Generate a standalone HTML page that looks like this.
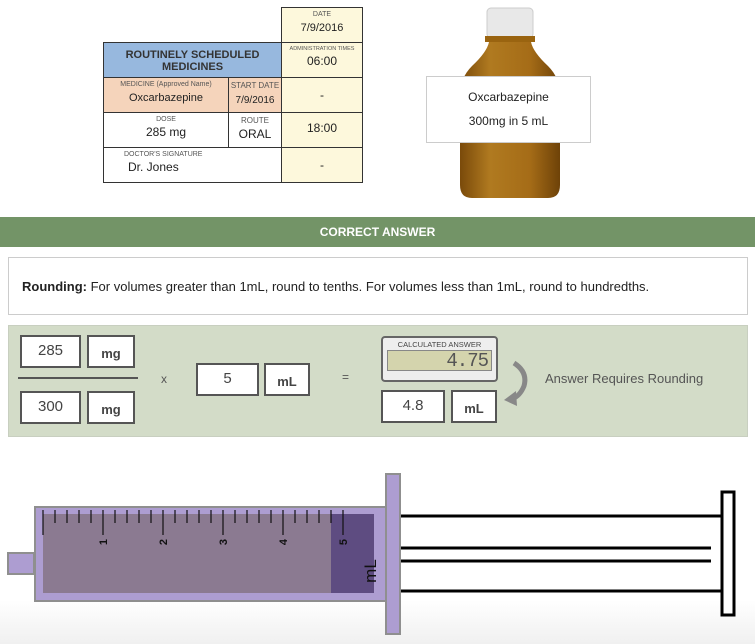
<!DOCTYPE html>
<html><head><style>
*{margin:0;padding:0;box-sizing:border-box}
body{width:755px;height:644px;background:#fff;font-family:"Liberation Sans",Arial,sans-serif;position:relative;overflow:hidden;color:#222}
.a{position:absolute}
.c{position:absolute;border:1px solid #333;text-align:center}
.sm{font-size:7px;color:#555;display:block}
.bx{position:absolute;background:#fff;border:2px solid #555;text-align:center;font-size:15px;color:#444;padding-top:5px}
.u{font-weight:bold;font-size:13px;padding-top:9px}
</style></head><body>
<div class="c" style="left:281px;top:7px;width:82px;height:36px;background:#fdf8dc;padding-top:3px"><span class="sm">DATE</span><span style="font-size:11px">7/9/2016</span></div>
<div class="c" style="left:103px;top:42px;width:179px;height:36px;background:#97b8de;font-weight:bold;font-size:11px;padding-top:6px;line-height:12px;color:#333">ROUTINELY SCHEDULED<br>MEDICINES</div>
<div class="c" style="left:281px;top:42px;width:82px;height:36px;background:#fdf8dc;padding-top:3px"><span class="sm" style="font-size:5.5px">ADMINISTRATION TIMES</span><span style="font-size:12px;line-height:18px">06:00</span></div>
<div class="c" style="left:103px;top:77px;width:126px;height:36px;background:#f5d4bb;padding-top:3px"><span class="sm">MEDICINE (Approved Name)</span><span style="font-size:11px;line-height:18px">Oxcarbazepine</span></div>
<div class="c" style="left:228px;top:77px;width:54px;height:36px;background:#f5d4bb;padding-top:3px"><span class="sm" style="font-size:8px">START DATE</span><span style="font-size:10px;line-height:14px">7/9/2016</span></div>
<div class="c" style="left:281px;top:77px;width:82px;height:36px;background:#fdf8dc;padding-top:10px;font-size:12px">-</div>
<div class="c" style="left:103px;top:112px;width:126px;height:36px;padding-top:3px"><span class="sm">DOSE</span><span style="font-size:12px;line-height:16px">285 mg</span></div>
<div class="c" style="left:228px;top:112px;width:54px;height:36px;padding-top:3px"><span class="sm" style="font-size:8px">ROUTE</span><span style="font-size:12px;line-height:14px">ORAL</span></div>
<div class="c" style="left:281px;top:112px;width:82px;height:36px;background:#fdf8dc;padding-top:8px;font-size:12px">18:00</div>
<div class="c" style="left:103px;top:147px;width:179px;height:36px;text-align:left;padding:3px 0 0 20px"><span class="sm">DOCTOR'S SIGNATURE</span><span style="font-size:12px;margin-left:4px">Dr. Jones</span></div>
<div class="c" style="left:281px;top:147px;width:82px;height:36px;background:#fdf8dc;padding-top:10px;font-size:12px">-</div>
<svg class="a" style="left:440px;top:0" width="140" height="205">
<defs><linearGradient id="g" x1="0" x2="1"><stop offset="0" stop-color="#7a4a0a"/><stop offset=".3" stop-color="#b07a20"/><stop offset=".7" stop-color="#a56c17"/><stop offset="1" stop-color="#6e4208"/></linearGradient></defs>
<rect x="47" y="8" width="46" height="30" rx="4" fill="#e8e8e8" stroke="#ccc"/>
<rect x="45" y="36" width="50" height="6" fill="#9a6410"/>
<path d="M49 42 L91 42 Q93 52 108 66 Q120 78 120 95 L120 185 Q120 198 108 198 L32 198 Q20 198 20 185 L20 95 Q20 78 32 66 Q47 52 49 42Z" fill="url(#g)"/>
</svg>
<div class="a" style="left:426px;top:76px;width:165px;height:67px;background:#fff;border:1px solid #ccc;text-align:center;font-size:12px;padding-top:8px;line-height:24px">Oxcarbazepine<br>300mg in 5 mL</div>
<div class="a" style="left:0;top:217px;width:755px;height:30px;background:#739467;color:#fff;font-weight:bold;font-size:12px;text-align:center;line-height:30px">CORRECT ANSWER</div>
<div class="a" style="left:8px;top:257px;width:740px;height:58px;border:1px solid #ccc;font-size:13px;padding:21px 0 0 13px"><b>Rounding:</b> For volumes greater than 1mL, round to tenths. For volumes less than 1mL, round to hundredths.</div>
<div class="a" style="left:8px;top:325px;width:740px;height:112px;background:#d3dcc8;border:1px solid #c8cfc0"></div>
<div class="bx" style="left:20px;top:335px;width:61px;height:33px">285</div>
<div class="bx u" style="left:87px;top:335px;width:48px;height:33px">mg</div>
<div class="a" style="left:18px;top:377px;width:120px;height:2px;background:#555"></div>
<div class="bx" style="left:20px;top:391px;width:61px;height:33px">300</div>
<div class="bx u" style="left:87px;top:391px;width:48px;height:33px">mg</div>
<div class="a" style="left:161px;top:372px;font-size:12px;color:#555">x</div>
<div class="bx" style="left:196px;top:363px;width:63px;height:33px">5</div>
<div class="bx u" style="left:264px;top:363px;width:46px;height:33px">mL</div>
<div class="a" style="left:342px;top:370px;font-size:12px;color:#555">=</div>
<div class="a" style="left:381px;top:336px;width:117px;height:46px;background:#eee;border:2px solid #666;border-radius:4px">
<div style="font-size:7.5px;color:#444;text-align:center;margin-top:2px">CALCULATED ANSWER</div>
<div style="margin:1px 4px;height:21px;background:#d4d4ad;border:1px solid #888;text-align:right;font-family:'Liberation Mono',monospace;font-size:19px;line-height:20px;padding-right:3px;color:#555;letter-spacing:-1px">4.75</div></div>
<div class="bx" style="left:381px;top:390px;width:64px;height:33px">4.8</div>
<div class="bx u" style="left:451px;top:390px;width:46px;height:33px">mL</div>
<svg class="a" style="left:500px;top:358px" width="35" height="50"><path d="M14 5 Q28 14 24 28 Q20 38 12 41" fill="none" stroke="#888" stroke-width="5"/><path d="M4 42 L16 33 L17 48Z" fill="#888"/></svg>
<div class="a" style="left:545px;top:371px;font-size:13px;color:#555">Answer Requires Rounding</div>
<div class="a" style="left:0;top:600px;width:755px;height:44px;background:linear-gradient(#fff,#f0f0f0)"></div>
<svg class="a" style="left:0;top:465px" width="755" height="179">
<rect x="8" y="88" width="26" height="21" fill="#ad9dd1" stroke="#8f8f8f" stroke-width="2"/>
<rect x="35" y="42" width="352" height="94" fill="#ad9dd1" stroke="#8f8f8f" stroke-width="2"/>
<rect x="43" y="49" width="288" height="79" fill="#8b7a91"/>
<rect x="331" y="49" width="43" height="79" fill="#5e4c81"/>
<rect x="374" y="53" width="13" height="72" fill="#ad9dd1"/>
<g stroke="#111" stroke-width="1.2">
<line x1="43" y1="45" x2="43" y2="70"/>
<line x1="55" y1="45" x2="55" y2="58"/><line x1="67" y1="45" x2="67" y2="58"/><line x1="79" y1="45" x2="79" y2="58"/><line x1="91" y1="45" x2="91" y2="58"/>
<line x1="103" y1="45" x2="103" y2="70"/>
<line x1="115" y1="45" x2="115" y2="58"/><line x1="127" y1="45" x2="127" y2="58"/><line x1="139" y1="45" x2="139" y2="58"/><line x1="151" y1="45" x2="151" y2="58"/>
<line x1="163" y1="45" x2="163" y2="70"/>
<line x1="175" y1="45" x2="175" y2="58"/><line x1="187" y1="45" x2="187" y2="58"/><line x1="199" y1="45" x2="199" y2="58"/><line x1="211" y1="45" x2="211" y2="58"/>
<line x1="223" y1="45" x2="223" y2="70"/>
<line x1="235" y1="45" x2="235" y2="58"/><line x1="247" y1="45" x2="247" y2="58"/><line x1="259" y1="45" x2="259" y2="58"/><line x1="271" y1="45" x2="271" y2="58"/>
<line x1="283" y1="45" x2="283" y2="70"/>
<line x1="295" y1="45" x2="295" y2="58"/><line x1="307" y1="45" x2="307" y2="58"/><line x1="319" y1="45" x2="319" y2="58"/><line x1="331" y1="45" x2="331" y2="58"/>
<line x1="343" y1="45" x2="343" y2="70"/>
</g>
<g font-size="11" font-weight="bold" fill="#111" font-family="Liberation Sans">
<text transform="translate(107,77) rotate(-90)" text-anchor="middle">1</text>
<text transform="translate(167,77) rotate(-90)" text-anchor="middle">2</text>
<text transform="translate(227,77) rotate(-90)" text-anchor="middle">3</text>
<text transform="translate(287,77) rotate(-90)" text-anchor="middle">4</text>
<text transform="translate(347,77) rotate(-90)" text-anchor="middle">5</text>
<text transform="translate(376,106) rotate(-90)" text-anchor="middle" font-size="17" font-weight="normal">mL</text>
</g>
<g stroke="#000" stroke-width="3">
<line x1="388" y1="51" x2="721" y2="51"/><line x1="388" y1="126" x2="721" y2="126"/>
<line x1="392" y1="83" x2="711" y2="83"/><line x1="392" y1="96" x2="711" y2="96"/>
</g>
<rect x="386" y="9" width="14" height="160" fill="#ad9dd1" stroke="#8f8f8f" stroke-width="2"/>
<rect x="722" y="27" width="12" height="123" fill="#fff" stroke="#000" stroke-width="3"/>
</svg>
</body></html>
